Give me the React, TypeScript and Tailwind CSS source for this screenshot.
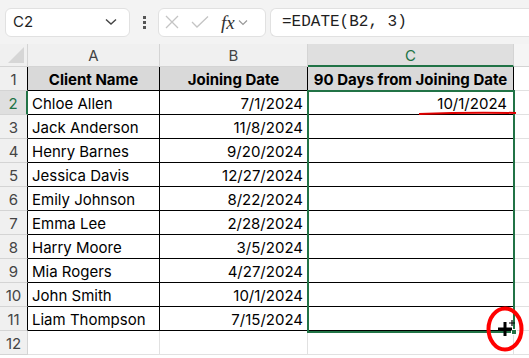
import React from "react";

const rows: [string, string][] = [
  ["Chloe Allen", "7/1/2024"],
  ["Jack Anderson", "11/8/2024"],
  ["Henry Barnes", "9/20/2024"],
  ["Jessica Davis", "12/27/2024"],
  ["Emily Johnson", "8/22/2024"],
  ["Emma Lee", "2/28/2024"],
  ["Harry Moore", "3/5/2024"],
  ["Mia Rogers", "4/27/2024"],
  ["John Smith", "10/1/2024"],
  ["Liam Thompson", "7/15/2024"],
];

const font = { fontFamily: "Inter, 'Noto Sans', sans-serif" };

export default function App() {
  return (
    <div className="w-[529px] h-[358px] overflow-hidden bg-white relative" style={font}>
      {/* Toolbar */}
      <div className="h-[44px] bg-[#f3f3f3] flex items-center pl-[5px] gap-0">
        <div className="w-[125px] h-[29px] bg-white border border-[#e1e1e1] rounded-[6px] flex items-center justify-between pl-[7px] pr-[12px]">
          <span className="text-[15px] text-[#1f1f1f]">C2</span>
          <svg width="12" height="8" viewBox="0 0 12 8"><path d="M1 1.5 L6 6 L11 1.5" fill="none" stroke="#444" strokeWidth="1.4" /></svg>
        </div>
        <div className="w-[28px] flex flex-col items-center gap-[2px]">
          <div className="w-[3px] h-[3px] bg-[#555]" />
          <div className="w-[3px] h-[3px] bg-[#555]" />
          <div className="w-[3px] h-[3px] bg-[#555]" />
        </div>
        <div className="w-[108px] h-[29px] bg-white border border-[#e1e1e1] rounded-[6px] flex items-center pl-[6px] gap-[12px]">
          <svg width="14" height="14" viewBox="0 0 14 14"><path d="M1 1 L13 13 M13 1 L1 13" stroke="#c4c4c4" strokeWidth="1.3" /></svg>
          <svg width="18" height="14" viewBox="0 0 18 14"><path d="M1 7 L6 12 L17 1.5" fill="none" stroke="#c4c4c4" strokeWidth="1.3" /></svg>
          <div className="flex items-center gap-[3px]">
            <span className="text-[19px] italic text-[#333] leading-none" style={{ fontFamily: "'Liberation Serif', serif" }}>fx</span>
            <svg width="10" height="7" viewBox="0 0 10 7"><path d="M1 1.5 L5 5.5 L9 1.5" fill="none" stroke="#999" strokeWidth="1.2" /></svg>
          </div>
        </div>
        <div className="ml-[4px] flex-1 h-[29px] bg-white border border-[#e1e1e1] rounded-l-[6px] border-r-0 flex items-center pl-[11px]">
          <span className="text-[16px] text-[#1f1f1f]" style={{ fontFamily: "'Liberation Mono', monospace" }}>=EDATE(B2, 3)</span>
        </div>
      </div>

      {/* Grid */}
      <div className="grid grid-cols-[28px_132px_148px_206px_1fr]">
        {/* Column headers */}
        <div className="h-[23px] bg-[#f0f0f0] border-r border-b border-[#d4d4d4] relative">
          <div className="absolute right-[3px] bottom-[3px] w-0 h-0 border-l-[16px] border-l-transparent border-b-[16px] border-b-[#d6d6d6]" />
        </div>
        <div className="h-[23px] pt-[3px] bg-[#f0f0f0] border-r border-b border-[#d4d4d4] flex items-center justify-center text-[15px] text-[#444]">A</div>
        <div className="h-[23px] pt-[3px] bg-[#f0f0f0] border-r border-b border-[#d4d4d4] flex items-center justify-center text-[15px] text-[#444]">B</div>
        <div className="h-[23px] pt-[3px] bg-[#dfdfdf] border-r border-[#d4d4d4] border-b-[2px] border-b-[#217346] flex items-center justify-center text-[15px] text-[#217346]">C</div>
        <div className="h-[23px] bg-[#f5f5f5] border-b border-[#d4d4d4]" />

        {/* Row 1 */}
        <div className="h-[24px] pt-[3px] bg-[#f0f0f0] border-r border-r-black border-b border-b-[#d4d4d4] flex items-center justify-center text-[15px] text-[#444]">1</div>
        <div className="h-[24px] pt-[3px] bg-[#d9d9d9] border-r border-b border-black flex items-center justify-center text-[15px] font-bold text-black">Client Name</div>
        <div className="h-[24px] pt-[3px] bg-[#d9d9d9] border-r border-b border-black flex items-center justify-center text-[15px] font-bold text-black">Joining Date</div>
        <div className="h-[24px] pt-[3px] bg-[#d9d9d9] border-r border-b border-black flex items-center justify-center text-[15px] font-bold text-black whitespace-nowrap">90 Days from Joining Date</div>
        <div className="h-[24px] border-b border-[#e1e1e1]" />

        {rows.map(([name, date], i) => {
          const r = i + 2;
          const sel = r === 2;
          return (
            <React.Fragment key={r}>
              <div
                className={
                  "h-[24px] pt-[3px] border-b border-b-[#d4d4d4] flex items-center justify-center text-[15px] " +
                  (sel
                    ? "bg-[#dfdfdf] border-r-[2px] border-r-[#217346] text-[#217346]"
                    : "bg-[#f0f0f0] border-r border-r-black text-[#444]")
                }
              >
                {r}
              </div>
              <div className="h-[24px] pt-[3px] border-r border-b border-black flex items-center pl-[4px] text-[15px] text-black whitespace-nowrap">{name}</div>
              <div className="h-[24px] pt-[3px] border-r border-b border-black flex items-center justify-end pr-[4px] text-[15px] text-black">{date}</div>
              <div className="h-[24px] pt-[3px] border-r border-b border-black flex items-center justify-end pr-[6px] text-[15px] text-black">{sel ? "10/1/2024" : ""}</div>
              <div className="h-[24px] border-b border-[#e1e1e1]" />
            </React.Fragment>
          );
        })}

        {/* Row 12 */}
        <div className="h-[24px] pt-[3px] bg-[#f0f0f0] border-r border-b border-[#d4d4d4] flex items-center justify-center text-[15px] text-[#444]">12</div>
        <div className="h-[24px] border-r border-b border-[#e1e1e1]" />
        <div className="h-[24px] border-r border-b border-[#e1e1e1]" />
        <div className="h-[24px] border-r border-b border-[#e1e1e1]" />
        <div className="h-[24px] border-b border-[#e1e1e1]" />
      </div>

      {/* Selection box C2:C11 */}
      <div className="absolute left-[307px] top-[90px] w-[208px] h-[243px] border-[2px] border-[#217346] pointer-events-none" />
      {/* red underline */}
      <svg className="absolute left-[418px] top-[110px]" width="100" height="6" viewBox="0 0 100 6">
        <path d="M1 4 Q50 2 98 3" fill="none" stroke="#e00000" strokeWidth="2" />
      </svg>
      {/* fill handle + cursor */}
      <div className="absolute left-[511px] top-[329px] w-[6px] h-[6px] bg-[#217346] border border-white" />
      <svg className="absolute left-[486px] top-[306px]" width="40" height="46" viewBox="0 0 40 46">
        <ellipse cx="19" cy="23" rx="16.5" ry="20.5" fill="none" stroke="#ff0000" strokeWidth="4" />
        <path d="M19 16 V30 M12 23 H26" stroke="#000" strokeWidth="3" />
        <path d="M26 14 V20 M23 17 H29" stroke="#000" strokeWidth="1.2" />
      </svg>
    </div>
  );
}
